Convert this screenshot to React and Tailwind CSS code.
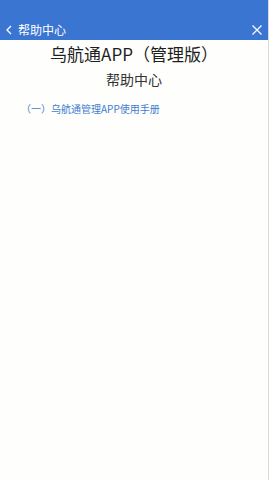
import React from 'react';

const font = { fontFamily: '"Noto Sans CJK SC", "Liberation Sans", sans-serif' };

const Header = () => (
  <div className="bg-[#3a75d2] pt-[19px] h-[40px] flex items-center justify-between text-white">
    <div className="flex items-center">
      <svg width="14" height="14" viewBox="0 0 14 14" className="ml-[2px]">
        <path d="M9 3 L5 7 L9 11" fill="none" stroke="white" strokeWidth="1.3" />
      </svg>
      <span className="text-[12px] leading-none ml-[2px]">帮助中心</span>
    </div>
    <svg width="12" height="12" viewBox="0 0 12 12" className="mr-[5px]">
      <path d="M1.5 1.5 L10.5 10.5 M10.5 1.5 L1.5 10.5" stroke="white" strokeWidth="1.2" />
    </svg>
  </div>
);

export default function App() {
  return (
    <div className="w-[269px] h-[480px] bg-[#fefefc] border-r border-[#d9d9dc] flex flex-col" style={font}>
      <Header />
      <div className="flex flex-col">
        <h1 className="text-center text-[17px] leading-none text-[#1e1e1e] mt-[5px]">乌航通APP（管理版）</h1>
        <h2 className="text-center text-[14px] leading-none text-[#333] mt-[10px]">帮助中心</h2>
        <a className="text-[10px] leading-none text-[#3d7cd0] mt-[18px] ml-[21px]">（一）乌航通管理APP使用手册</a>
      </div>
    </div>
  );
}
